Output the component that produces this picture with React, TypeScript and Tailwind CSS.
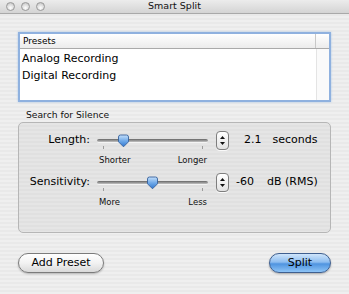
const font = "font-['DejaVu_Sans',sans-serif]";

function Light() {
    return (
        <div className="w-[9px] h-[9px] rounded-full border border-[#9a9a9a] bg-[radial-gradient(circle_at_50%_70%,#ffffff_0%,#dcdcdc_55%,#b9b9b9_100%)]" />
    );
}

function Thumb() {
    return (
        <svg width="13" height="14" viewBox="0 0 13 14">
            <defs>
                <linearGradient id="thumbFill" x1="0" y1="0" x2="0" y2="1">
                    <stop offset="0" stopColor="#c6e0fb" />
                    <stop offset="0.5" stopColor="#6fa9e8" />
                    <stop offset="1" stopColor="#2f76cf" />
                </linearGradient>
            </defs>
            <path d="M1.5 3 Q1.5 1 3.5 1 H9.5 Q11.5 1 11.5 3 V7.8 L6.5 12.8 L1.5 7.8 Z" fill="url(#thumbFill)" stroke="#35619c" strokeWidth="0.9" />
        </svg>
    );
}

function Stepper() {
    return (
        <div className="w-[13px] h-[19px] rounded-[4px] border border-[#7e7e7e] bg-gradient-to-b from-white to-[#e2e2e2] flex flex-col items-center justify-center gap-[3px] shadow-[0_1px_0_rgba(255,255,255,0.8)]">
            <svg width="5" height="3" viewBox="0 0 5 3"><path d="M2.5 0 L5 3 H0 Z" fill="#111" /></svg>
            <svg width="5" height="3" viewBox="0 0 5 3"><path d="M0 0 H5 L2.5 3 Z" fill="#111" /></svg>
        </div>
    );
}

function Slider({ thumbLeft }: { thumbLeft: number }) {
    return (
        <div className="relative w-[111px] h-[19px]">
            <div className="absolute left-0 right-0 top-[8px] h-[4px] rounded-full bg-gradient-to-b from-[#666666] to-[#c4c4c4] border-b border-[#f4f4f4]" />
            <div className="absolute left-[6px] top-[15px] w-px h-[3px] bg-[#9c9c9c]" />
            <div className="absolute left-[105px] top-[15px] w-px h-[3px] bg-[#9c9c9c]" />
            <div className="absolute top-[3px]" style={{ left: thumbLeft }}>
                <Thumb />
            </div>
        </div>
    );
}

function SliderRow({ label, thumbLeft, value, valueGap, unit, unitGap, minLabel, maxLabel }: {
    label: string; thumbLeft: number; value: string; valueGap: number; unit: string; unitGap: number; minLabel: string; maxLabel: string;
}) {
    return (
        <div>
            <div className="flex items-center h-[19px]">
                <div className="w-[71px] text-right text-[11px] text-black">{label}</div>
                <div className="ml-[7px]"><Slider thumbLeft={thumbLeft} /></div>
                <div className="ml-[8px]"><Stepper /></div>
                <div className="text-[11px] text-black" style={{ marginLeft: valueGap }}>{value}</div>
                <div className="text-[11px] text-black" style={{ marginLeft: unitGap }}>{unit}</div>
            </div>
            <div className="flex mt-[5px] h-[11px] ml-[80px] w-[108px] justify-between items-center text-[8.5px] text-[#111] leading-[11px]">
                <span>{minLabel}</span>
                <span>{maxLabel}</span>
            </div>
        </div>
    );
}

export default function App() {
    return (
        <div className={`w-[349px] h-[294px] overflow-hidden ${font} bg-[repeating-linear-gradient(180deg,#efefef_0px,#efefef_2px,#e9e9e9_2px,#e9e9e9_4px)]`}>
            <div className="relative h-[14px] flex items-center justify-center bg-gradient-to-b from-[#ececec] to-[#d4d4d4] border-b border-[#a9a9a9]">
                <div className="absolute left-[6px] top-[2px] flex gap-[6px]">
                    <Light />
                    <Light />
                    <Light />
                </div>
                <span className="text-[9.5px] text-[#111]">Smart Split</span>
            </div>

            <div className="px-[18px]">
                <div className="mt-[18px] h-[70px] border-2 border-[#8fb1df] shadow-[0_0_2px_#a9c6ea] bg-white flex flex-col">
                    <div className="h-[15px] flex border-b border-[#aaaaaa] bg-gradient-to-b from-white to-[#ececec]">
                        <div className="flex-1 pl-[3px] text-[9px] leading-[15px] text-black border-r border-[#c8c8c8]">Presets</div>
                        <div className="w-[13px]" />
                    </div>
                    <div className="flex-1 flex">
                        <div className="flex-1 pl-[2px] pt-px text-[11px] leading-[17px] text-black">
                            <div>Analog Recording</div>
                            <div>Digital Recording</div>
                        </div>
                        <div className="w-[13px] border-l border-[#e4e4e4] bg-[#fafafa]" />
                    </div>
                </div>

                <div className="mt-[7px] ml-[8px] text-[9.2px] leading-[11px] text-[#111]">Search for Silence</div>

                <div className="mt-[2px] h-[111px] rounded-[5px] border border-[#b6b6b6] bg-[repeating-linear-gradient(180deg,#e5e5e5_0px,#e5e5e5_2px,#e0e0e0_2px,#e0e0e0_4px)] pt-[8px] flex flex-col gap-[7px]">
                    <SliderRow label="Length:" thumbLeft={20} value="2.1" valueGap={15} unit="seconds" unitGap={11} minLabel="Shorter" maxLabel="Longer" />
                    <SliderRow label="Sensitivity:" thumbLeft={49} value="-60" valueGap={7} unit="dB (RMS)" unitGap={13} minLabel="More" maxLabel="Less" />
                </div>

                <div className="mt-[20px] flex justify-between">
                    <button className="w-[86px] h-[20px] rounded-full border border-[#7b7b7b] bg-gradient-to-b from-white via-[#f2f2f2] to-[#d9d9d9] shadow-[0_1px_2px_rgba(0,0,0,0.25)] text-[11px] text-black">
                        Add Preset
                    </button>
                    <button className="w-[62px] h-[20px] rounded-full border border-[#3f5f8f] bg-[linear-gradient(180deg,#cfe5fb_0%,#8dbdf0_45%,#4f94e0_55%,#8ec4f6_100%)] shadow-[0_1px_2px_rgba(0,0,0,0.3)] text-[11px] text-black">
                        Split
                    </button>
                </div>
            </div>
        </div>
    );
}
